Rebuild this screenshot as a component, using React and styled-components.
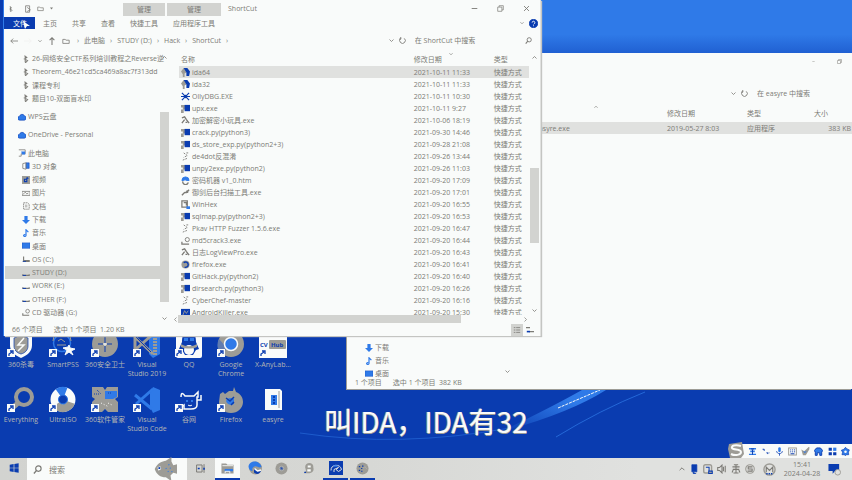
import React from "react";
import styled, { createGlobalStyle, css } from "styled-components";

const c = {
  paper: "#f9fbfa",
  grey: "#9d9c96",
  ink: "#7c7b76",
  navy: "#0a3cb0",
  blue: "#2f7ae8",
  soft: "#e0e1df",
  mid: "#d2d3d0",
};

const GlobalStyle = createGlobalStyle`
  *, *::before, *::after { box-sizing: border-box; }
  body {
    margin: 0;
    overflow: hidden;
    font-family: "Open Sans", "Noto Sans CJK SC", sans-serif;
    font-size: 7px;
    line-height: 9px;
    color: ${c.ink};
  }
  button, input { font: inherit; color: inherit; border: 0; padding: 0; margin: 0; background: none; }
  button { cursor: default; }
  a { color: inherit; text-decoration: none; }
  svg { display: block; flex: none; }
`;

/* ---------- Desktop ---------- */

const Screen = styled.div`
  position: relative;
  display: flex;
  flex-direction: column;
  width: 100%;
  height: 100vh;
  overflow: hidden;
  background: ${c.navy};
`;

const Wallpaper = styled.svg`
  position: absolute;
  inset: 0;
  width: 100%;
  height: 100%;
`;

const IconGrid = styled.main`
  position: relative;
  flex: 1;
  min-height: 0;
  display: grid;
  grid-template-columns: repeat(7, 42px);
  grid-auto-rows: 55px;
  align-content: end;
  padding-bottom: 17px;
`;

const Shortcut = styled.button`
  position: relative;
  display: flex;
  flex-direction: column;
  align-items: center;
  gap: 1px;
  color: #b4b6b4;
  text-align: center;
`;

const ShortcutLabel = styled.span`
  width: 42px;
  white-space: pre-line;
`;

const Badge = styled.svg`
  position: absolute;
  left: 7px;
  top: 18px;
`;

const Caption = styled.p`
  position: absolute;
  left: 0;
  right: 0;
  bottom: 39px;
  margin: 0;
  text-align: center;
  font-family: "Noto Sans CJK SC", sans-serif;
  font-weight: 400;
  font-size: 28px;
  line-height: 40px;
  color: ${c.paper};
  text-shadow: -1px 0 ${c.grey}, 0 1px ${c.grey};
`;

/* ---------- Windows ---------- */

const Frame = styled.section`
  position: absolute;
  display: flex;
  flex-direction: column;
  height: 70vh;
  overflow: hidden;
  background: ${c.paper};
`;

const FrontFrame = styled(Frame)`
  left: 4px;
  top: 0;
  width: 63vw;
  border-right: 1px solid ${c.soft};
  box-shadow: -1px 0 ${c.blue}, 1px 1px 1px #c4c5c2;
`;

const BackFrame = styled(Frame)`
  left: 347px;
  right: 0;
  top: 53px;
  box-shadow: -1px 1px ${c.grey};
`;

const TitleBar = styled.header`
  display: flex;
  align-items: center;
  height: 17px;
  padding-left: 4px;
`;

const QuickAccess = styled.div`
  display: flex;
  align-items: center;
  gap: 5px;
  width: 115px;
`;

const ContextTab = styled.button`
  align-self: stretch;
  width: ${(p) => (p.$wide ? "54px" : "42px")};
  margin: 3px 2px 1px 0;
  background: ${c.mid};
`;

const TitleText = styled.span`
  flex: 1;
  padding-left: 5px;
`;

const Controls = styled.div`
  display: flex;
  align-items: center;
`;

const ControlButton = styled.button`
  display: grid;
  place-items: center;
  width: 26px;
  height: 17px;
`;

const TabRow = styled.nav`
  display: flex;
  align-items: stretch;
  height: 12px;
`;

const Tab = styled.button`
  padding: 0 7px 0 8px;
  ${(p) =>
    p.$file &&
    css`
      position: relative;
      width: 31px;
      background: ${c.navy};
      color: ${c.paper};
    `}
`;

const TabTools = styled.div`
  flex: 1;
  display: flex;
  align-items: center;
  justify-content: flex-end;
  gap: 5px;
  padding-right: 2px;
`;

const Pointer = styled.svg`
  position: absolute;
  left: 19px;
  top: 4px;
`;

const AddressRow = styled.div`
  display: flex;
  align-items: center;
  height: 23px;
  padding-left: 6px;
`;

const NavButtons = styled.div`
  display: flex;
  align-items: center;
  width: 67px;
  gap: 6px;
`;

const Crumbs = styled.div`
  flex: 1;
  display: flex;
  align-items: center;
  gap: 5px;
  white-space: nowrap;
`;

const AddressTools = styled.div`
  display: flex;
  align-items: center;
  gap: 5px;
  width: 26px;
`;

const SearchField = styled.label`
  display: flex;
  align-items: center;
  width: ${(p) => (p.$narrow ? "95px" : "125px")};
  padding-right: 8px;

  input {
    flex: 1;
    min-width: 0;
    height: 11px;
  }
  input::placeholder {
    color: ${c.ink};
    opacity: 1;
  }
`;

const Body = styled.div`
  flex: 1;
  min-height: 0;
  display: flex;
`;

const Sidebar = styled.aside`
  flex: none;
  width: 165px;
  display: flex;
`;

const Tree = styled.nav`
  flex: 1;
  min-width: 0;
  display: flex;
  flex-direction: column;
  justify-content: flex-end;
  padding-bottom: 4px;
  ${(p) =>
    p.$low &&
    css`
      padding-bottom: 0;
      margin-bottom: -4px;
      > a { max-height: 13px; }
    `}
`;

const TreeItem = styled.a`
  flex: 1 1 0;
  max-height: 14px;
  min-height: 0;
  display: flex;
  align-items: center;
  gap: 2px;
  margin-top: ${(p) => (p.$group ? "5px" : "0")};
  margin-left: 1px;
  padding-left: ${(p) => (p.$level ? "17px" : "13px")};
  background: ${(p) => (p.$active ? c.mid : "none")};
  white-space: nowrap;
`;

const VScroll = styled.div`
  flex: none;
  width: ${(p) => (p.$slim ? "9px" : "11px")};
  display: flex;
  flex-direction: column;
  align-items: center;
  padding: 3px 0 2px;
`;

const Thumb = styled.div`
  width: ${(p) => (p.$horizontal ? "283px" : "9px")};
  height: ${(p) => (p.$horizontal ? "8px" : p.$size)};
  margin: ${(p) => (p.$horizontal ? "0 auto 0 0" : `${p.$before} 0 auto`)};
  background: ${c.mid};
`;

const Pane = styled.div`
  flex: 1;
  min-width: 0;
  display: flex;
  flex-direction: column;
`;

const PaneMain = styled.div`
  flex: 1;
  min-height: 0;
  display: flex;
`;

const ListClip = styled.div`
  flex: 1;
  min-width: 0;
  overflow: hidden;
  padding-left: 10px;
`;

const HScroll = styled.div`
  display: flex;
  align-items: center;
  height: 8px;
  padding: 0 12px 0 4px;
`;

const FileTable = styled.table`
  width: 100%;
  table-layout: fixed;
  border-collapse: collapse;
  text-align: left;
  white-space: nowrap;

  th, td { padding: 0 0 0 2px; font-weight: 400; }
  th { position: relative; height: ${(p) => (p.$back ? "17px" : "14px")}; }
  td { height: 12px; }
  th:nth-child(2), td:nth-child(2) { width: 80px; }
  th:nth-child(3), td:nth-child(3) { width: ${(p) => (p.$back ? "67px" : "37px")}; }
  th:nth-child(4) { width: 40px; }
  td:nth-child(4) { text-align: right; padding-right: 1px; }
`;

const SortMark = styled.span`
  position: absolute;
  top: 0;
  left: ${(p) => (p.$name ? "72px" : "37px")};
`;

const FileRow = styled.tr`
  background: ${(p) => (p.$active ? c.soft : "none")};
`;

const FileName = styled.a`
  display: flex;
  align-items: center;
  gap: 2px;
`;

const StatusBar = styled.footer`
  display: flex;
  align-items: center;
  gap: 11px;
  height: 13px;
  padding: 0 4px 0 8px;
`;

const ViewButtons = styled.div`
  display: flex;
  align-items: center;
  gap: 1px;
  margin-left: auto;
`;

const ViewButton = styled.button`
  display: grid;
  place-items: center;
  width: 12px;
  height: 12px;
  background: ${(p) => (p.$active ? c.mid : "none")};
`;

/* ---------- Input method bar and taskbar ---------- */

const InputBar = styled.div`
  position: absolute;
  right: 0;
  bottom: 22px;
  display: flex;
  align-items: center;
  justify-content: space-between;
  width: 112px;
  height: 14px;
  padding: 0 2px 0 8px;
  background: ${c.paper};
`;

const InputLogo = styled.svg`
  position: absolute;
  left: -13px;
  top: -3px;
`;

const Taskbar = styled.footer`
  position: relative;
  display: flex;
  align-items: stretch;
  height: 22px;
  background: linear-gradient(90deg, ${c.mid}, #d6d7d4 40%, ${c.soft} 75%);
`;

const TaskButton = styled.button`
  display: grid;
  place-items: center;
  width: 25px;
  margin: 0 1px;
  border-bottom: 2px solid transparent;
  ${(p) =>
    p.$open &&
    css`
      border-bottom-color: ${c.navy};
      background: ${p.$front ? c.paper : "none"};
    `}
`;

const TaskSearch = styled.label`
  display: flex;
  align-items: center;
  gap: 7px;
  width: 160px;
  padding: 0 10px 0 6px;
  background: ${c.paper};
  font-size: 8px;

  input { flex: 1; min-width: 0; }
  input::placeholder { color: ${c.ink}; opacity: 1; }
`;

const Tray = styled.div`
  display: flex;
  align-items: center;
  gap: 4px;
  margin-left: auto;
  padding-right: 11px;
`;

const TrayButton = styled.button`
  display: grid;
  place-items: center;
  margin-left: ${(p) => (p.$apart ? "4px" : "0")};
`;

const Clock = styled.time`
  width: 44px;
  text-align: center;
`;

/* ---------- Drawings ---------- */

const Glyph = ({ size = 8, box = 10, children }) => (
  <svg
    width={size}
    height={size}
    viewBox={`0 0 ${box} ${box}`}
    fill="none"
    stroke={c.ink}
    strokeWidth="1"
    aria-hidden="true"
  >
    {children}
  </svg>
);

const glyphs = {
  up: <path d="M1 7l4-4 4 4" strokeWidth="1.6" />,
  down: <path d="M1 3l4 4 4-4" strokeWidth="1.6" />,
  left: <path d="M7 1L3 5l4 4" strokeWidth="1.4" />,
  right: <path d="M3 1l4 4-4 4" strokeWidth="1.4" />,
  back: <path d="M10 5H1M4 2L1 5l3 3" />,
  forward: <path d="M0 5h9M6 2l3 3-3 3" stroke="#f1f2f0" />,
  rise: <path d="M5 10V1M2 4l3-3 3 3" strokeWidth="1.3" />,
  refresh: <path d="M7.5 2A4 4 0 1 1 2.5 2M2.5 0v3H0" strokeWidth="1.3" />,
  search: (
    <>
      <circle cx="6" cy="4" r="3" strokeWidth="1.3" />
      <path d="M4 6L1 9.5" strokeWidth="1.5" />
    </>
  ),
  minimize: <path d="M1 5h8" strokeWidth="1.3" />,
  maximize: <path d="M1 3h6v6H1zM3 3V1h6v6H7" />,
  close: <path d="M1.5 1.5l7 7M8.5 1.5l-7 7" strokeWidth="1.3" />,
  link: <path d="M3 1l3 2-3 2 4 2-3 3M4 1v8" strokeWidth="1.3" />,
  clip: <path d="M2 1h5v8H2zM4 3l4 3-4 2" />,
  folder: <path d="M1 3h3l1 1h4v4H1z" />,
  dot: <path d="M2 3h6L5 7z" fill={c.ink} stroke="none" />,
  cloud: (
    <path
      d="M2.5 9A2.500 2.500 0 0 1 2 4a3.200 3.200 0 0 1 6-.5A2.800 2.800 0 0 1 8 9z"
      fill={c.blue}
      stroke={c.navy}
      strokeWidth=".7"
    />
  ),
  drive: (
    <>
      <path d="M1 6.5V8h8V6.500" strokeWidth="1.4" />
      <path d="M1 8h4" stroke={c.navy} strokeWidth="1.2" />
    </>
  ),
  osdrive: (
    <>
      <path d="M2 2v5h7v1H1" strokeWidth="1.4" />
      <path d="M1 8h4" stroke={c.navy} />
    </>
  ),
  disc: (
    <>
      <circle cx="7" cy="4" r="2.300" />
      <path d="M1 6.5V9h8" strokeWidth="1.4" />
    </>
  ),
  pc: (
    <>
      <path d="M1 1h8v5H4v3H1" />
      <path d="M4 3h5v4H5z" fill={c.blue} stroke="none" />
    </>
  ),
  cube: (
    <>
      <path d="M5 1h4v7H5z" fill={c.blue} stroke={c.navy} strokeWidth=".6" />
      <path d="M5 1L1 2v6l4 1z" />
    </>
  ),
  video: (
    <>
      <rect width="10" height="10" fill={c.grey} stroke="none" />
      <path d="M6 2v5H3V4h3M6 2l2 1" stroke={c.navy} strokeWidth="1.4" />
    </>
  ),
  picture: <path d="M0 3h10v5H0zM1 7l3-3 2 2 2-1" />,
  doc: <path d="M2 1h5l2 2v6H2zM4 4h3M4 6h3" strokeDasharray="2 .6" />,
  download: <path d="M3 0h4v5h3L5 10 0 5h3z" fill={c.blue} stroke="none" />,
  music: <path d="M5 8V1l3 3M5 8a1.500 1.200 0 1 1-1-1" stroke={c.blue} strokeWidth="1.5" />,
  desk: <path d="M0 1h10v7H0z" fill={c.blue} stroke={c.navy} strokeWidth=".4" />,
  ida: (
    <>
      <path d="M0 4l3-4 3 1v4l-2 1v4H2V7z" fill={c.grey} stroke="none" />
      <path d="M3 0h4l3 4-1 5H6V5z" fill={c.navy} stroke="none" />
    </>
  ),
  bug: (
    <>
      <path d="M1 1l8 8M9 1L1 9M0 5h10" stroke={c.navy} strokeWidth="1.3" />
      <circle cx="5" cy="5" r="2" fill={c.navy} stroke="none" />
    </>
  ),
  py: (
    <>
      <path d="M0 1h5v5H3v4H0V6h2V4H0z" fill={c.grey} stroke="none" />
      <path d="M4 1h6v7H4z" fill={c.navy} stroke="none" />
    </>
  ),
  tool: <path d="M1 2l3-1 2 3 3 4M4 4L1 8M5 7h2" strokeWidth="1.5" />,
  plain: <path d="M3 1l4 3-4 2M2 9l5-2M6 1h2" strokeDasharray="2 1" />,
  html: (
    <>
      <path d="M1 5a4 4 0 0 1 8 0H6a2 2 0 0 0-3 0z" fill={c.blue} stroke={c.blue} />
      <path d="M2 6a3 3 0 0 0 6 1" strokeWidth="1.5" />
    </>
  ),
  hex: (
    <>
      <path d="M1 1h6v7H1zM3 3h3v3" strokeWidth="1.4" />
      <path d="M6 7h4v3H6z" fill={c.blue} stroke="none" />
    </>
  ),
  fox: (
    <>
      <circle cx="5" cy="5" r="4.500" fill={c.grey} stroke="none" />
      <path d="M3 3a3 3 0 0 1 5 2 3 3 0 0 1-4 3" stroke={c.navy} strokeWidth="1.5" />
    </>
  ),
  killer: (
    <>
      <path d="M0 1h10v9H0z" fill={c.navy} stroke="none" />
      <path d="M2 8l2-5 2 3 2-3" stroke={c.grey} />
    </>
  ),
  wrench: <path d="M1 8l3-3M4 5h2l3-3M6 3l2 2" strokeWidth="1.5" />,
  rows: <path d="M1 2h8M1 5h8M1 8h8" strokeDasharray="2 1 5" />,
  tiles: (
    <>
      <path d="M0 2h5M4 7h6" strokeWidth="1.8" />
      <path d="M1 6h4v2H1z" fill={c.navy} stroke="none" />
    </>
  ),
  help: (
    <>
      <circle cx="5" cy="5" r="4.500" fill={c.navy} stroke={c.navy} />
      <path d="M3.5 4a1.500 1.500 0 1 1 2 1.400L5 6M5 7v1" stroke={c.paper} />
    </>
  ),
};

const Icon = ({ name, size }) => <Glyph size={size}>{glyphs[name]}</Glyph>;

const Art = ({ children, size = 28 }) => (
  <svg width={size} height={size} viewBox="0 0 28 28" fill="none" aria-hidden="true">
    {children}
  </svg>
);

const art = {
  shield: (
    <>
      <path d="M14 0l11 4v10c0 6-4 10-11 13C7 24 3 20 3 14V4z" fill={c.paper} />
      <path d="M14 4l7 3v8c0 4-3 7-7 8-4-1-7-4-7-8V7z" fill={c.grey} stroke={c.navy} strokeWidth=".7" />
      <path d="M17 7l-6 7h6l-6 6" stroke={c.paper} strokeWidth="1.5" />
    </>
  ),
  smart: (
    <>
      <circle cx="13" cy="12" r="8.500" fill={c.navy} stroke={c.blue} strokeWidth="1.5" />
      <path d="M4 10a9 9 0 0 1 18 0M8 14h9M9 10l3-2 4 3" stroke={c.grey} />
      <path d="M20 14l1 3 5 1-4 2 2 4-4-3-4 3 2-5-4-2 5-1z" fill={c.paper} stroke={c.paper} />
    </>
  ),
  guard: (
    <>
      <circle cx="14" cy="13" r="13" fill={c.grey} />
      <path d="M14 6v6M14 15v6M7 13h5M16 13h5" stroke={c.navy} />
      <path d="M14 12v3M12 13h4" stroke={c.paper} />
    </>
  ),
  vs: (
    <>
      <path d="M20 0l7 3v20l-7 4-4-4V5z" fill={c.blue} />
      <path d="M22 4v20" stroke={c.grey} strokeWidth="4" strokeDasharray="2 1" />
      <path d="M2 6l18 17M2 19L20 3M2 6v13" stroke={c.grey} strokeWidth="3" />
      <path d="M3 6l15 15" stroke={c.navy} />
    </>
  ),
  qq: (
    <>
      <rect x="1" y="0" width="26" height="27" rx="2" fill={c.paper} />
      <path d="M14 1c6 0 7 5 7 10l3 7-3 1-3 5h-8l-3-5-3-1 3-7c0-5 1-10 7-10z" fill={c.navy} />
      <path d="M9 7h4v3H9zM15 7h4v3h-4z" fill={c.blue} />
      <ellipse cx="14" cy="19" rx="5" ry="5" fill={c.paper} />
      <path d="M6 13c5 3 11 3 16 0v3c-5 2-11 2-16 0z" fill={c.grey} />
    </>
  ),
  chrome: (
    <>
      <circle cx="14" cy="13" r="13" fill={c.grey} />
      <path d="M2 8l8 9-5 7A13 13 0 0 1 2 8z" fill="#607cb0" />
      <circle cx="14" cy="13" r="6.500" fill={c.blue} stroke={c.paper} strokeWidth="1.5" />
    </>
  ),
  hub: (
    <>
      <rect x="0" y="0" width="28" height="27" fill={c.paper} />
      <rect x="10" y="9" width="17" height="9" rx="1" fill={c.grey} />
      <text x="1" y="16" fontSize="6" fontWeight="700" fill={c.navy}>CV</text>
      <text x="12" y="16" fontSize="6" fontWeight="700" fill={c.navy}>Hub</text>
    </>
  ),
  everything: (
    <>
      <circle cx="17" cy="11" r="8" stroke={c.grey} strokeWidth="4" />
      <path d="M11 17l-8 7" stroke={c.grey} strokeWidth="5" />
    </>
  ),
  iso: (
    <>
      <circle cx="14" cy="13.500" r="8.500" stroke={c.paper} strokeWidth="8" />
      <path d="M9 6.500a8.500 8.500 0 0 1 8-1" stroke={c.blue} strokeWidth="8" />
      <path d="M7 18.500a8.500 8.500 0 0 0 15-2" stroke={c.grey} strokeWidth="8" />
      <circle cx="14" cy="13.500" r="4.500" fill={c.navy} stroke={c.blue} />
    </>
  ),
  petals: (
    <>
      <path d="M1 1h11l2 3 2-3h11v10l-3 2 3 3v10H17l-3-3-3 3H1V16l3-3-3-2z" fill={c.grey} />
      <path d="M14 5h12v6l-4 2h-8z" fill={c.blue} />
      <path d="M6 4l4 4M3 8h6M17 7h4" stroke={c.navy} strokeDasharray="1 1" />
      <path d="M10 17l8 4M17 17l4 2" stroke={c.paper} strokeDasharray="1 2" />
    </>
  ),
  code: (
    <>
      <path d="M20 1l7 3v20l-7 3-3-6V7z" fill={c.blue} />
      <path d="M2 9l17 14M3 18L20 3" stroke={c.blue} strokeWidth="3" />
    </>
  ),
  bull: (
    <>
      <path d="M6 11c0-5 2-4 4-1h9l4-4v5h-1v8c0 3-2 4-6 4H9v-4L5 22M22 14h4v-5" stroke={c.paper} strokeWidth="1.5" fill={c.navy} />
      <path d="M12 14v2M17 14v2" stroke={c.blue} strokeWidth="2" />
      <path d="M13 19c1 1 3 1 4 0" stroke={c.paper} />
    </>
  ),
  firefox: (
    <>
      <path d="M17 1l2 5c5 2 7 6 7 10a12 11 0 0 1-24 0L3 8l3-2 2 2 4-3h4z" fill={c.grey} />
      <path d="M9 15c1-3 5-4 8-2v5c-4 2-7 0-8-3z" fill={c.blue} />
      <path d="M9 12l4 3 4-4M14 19l3-3" stroke={c.navy} strokeWidth="1.5" />
    </>
  ),
  archive: (
    <>
      <path d="M6 3h15l2 2v19H6z" fill={c.paper} />
      <path d="M20 5v17" stroke={c.grey} />
      <path d="M12 9h6v10h-6z" fill={c.blue} />
      <path d="M15 10v8" stroke={c.navy} strokeWidth="2" strokeDasharray="2 1" />
    </>
  ),
  fish: (
    <>
      <path d="M4 14c3-7 8-8 12-9l6-4v5l2 4 4-1v10l-4-1-3 3 1 6-6-4C10 23 6 20 4 14z" fill={c.grey} />
      <path d="M19 9l4 9M16 13l4 6" stroke={c.blue} strokeWidth="1.3" strokeDasharray="1 3" />
      <path d="M7 12l3-1 1 3-3 2z" fill={c.paper} />
      <path d="M9 12v2" stroke={c.navy} strokeWidth="2" />
    </>
  ),
  start: <path d="M2 5l11-2v10H2zM15 3l12-2v12H15zM2 15h11v10L2 23zM15 15h12v12l-12-2z" fill={c.navy} />,
  taskview: (
    <>
      <path d="M4 5v18M23 3v22M4 5h14v18H4" stroke={c.ink} strokeWidth="2.500" />
      <path d="M7 12h5v4H7zM21 12h4v5h-4z" fill={c.navy} />
    </>
  ),
  folder: (
    <>
      <path d="M1 3h10l3 3h13v19H1z" fill={c.grey} />
      <path d="M8 15h18v5H8z" fill={c.blue} />
      <path d="M3 8h23M9 24v-4h10v5" stroke={c.paper} strokeWidth="2" />
    </>
  ),
  edge: (
    <>
      <circle cx="15" cy="14" r="13" fill={c.grey} />
      <path d="M1 11C3-3 24-2 27 12c-6 3-9-3-14-1-4 1-5 5-4 9C5 20 1 16 1 11z" fill={c.blue} />
      <path d="M12 14c2 6 7 8 14 6-3 6-9 8-14 3z" fill={c.navy} />
      <path d="M13 15l6 5 7-2" stroke={c.paper} strokeWidth="3" />
    </>
  ),
  ring: (
    <>
      <circle cx="14" cy="14" r="13" fill={c.grey} />
      <circle cx="14" cy="14" r="5" fill="#7d8cab" stroke="#b0b0ac" strokeWidth="2" />
      <path d="M12 13h3v3" stroke={c.navy} strokeWidth="2" />
    </>
  ),
  browser: (
    <>
      <circle cx="14" cy="14" r="13" fill={c.grey} />
      <path d="M6 10h3M11 14h3M6 18h3M13 9h3M11 20h3" stroke={c.navy} strokeWidth="2.500" />
      <path d="M15 14l4-4 5 5" stroke="#b0b0ac" strokeWidth="2" />
    </>
  ),
  person: (
    <>
      <path d="M5 12C5-1 26-1 24 13c3 9-5 13-11 13H2l5-5z" fill={c.grey} />
      <path d="M11 8h7v5h-7zM10 17h8v5h-8z" fill={c.paper} />
      <path d="M3 24h4" stroke={c.navy} strokeWidth="3" />
    </>
  ),
  ida: (
    <>
      <rect width="28" height="28" fill={c.navy} />
      <path d="M4 19c-1-13 19-14 21-2l-6 4-5-4 5-4-9 4v5" stroke={c.soft} strokeWidth="2" />
      <path d="M9 10h8" stroke={c.blue} strokeWidth="3" />
    </>
  ),
  shieldTray: (
    <>
      <rect x="2" y="2" width="22" height="23" rx="5" stroke={c.grey} strokeWidth="4" />
      <path d="M8 9h9v9M16 20h10v7H16z" stroke={c.navy} strokeWidth="3" />
    </>
  ),
  usb: <path d="M8 2h14v20H8zM12 22v5h8" fill={c.navy} stroke={c.navy} strokeWidth="2" />,
  speaker: <path d="M2 10h5l7-7v22l-7-7H2zM18 8v12M23 5v18" stroke={c.ink} strokeWidth="3" />,
  wifi: <path d="M4 8h20M8 2h12M5 15h18M14 2v23M7 25h14M6 17l-3 7M22 17l3 7" stroke={c.ink} strokeWidth="3" />,
  sogou: (
    <>
      <circle cx="14" cy="14" r="12" stroke={c.grey} strokeWidth="3" />
      <path d="M21 8H9v6h11v6H7" stroke={c.ink} strokeWidth="3" />
    </>
  ),
  letterM: (
    <>
      <circle cx="14" cy="14" r="12" stroke={c.grey} strokeWidth="3" />
      <path d="M7 20V9l7 7 7-7v11" stroke={c.ink} strokeWidth="2.500" />
      <path d="M7 23h14" stroke={c.navy} strokeWidth="3" strokeDasharray="3 2" />
    </>
  ),
  notice: (
    <>
      <path d="M1 2h23v15h-9l-5 6v-6H1z" fill={c.navy} />
      <circle cx="21" cy="20" r="6" fill={c.soft} stroke={c.grey} strokeWidth="2" />
    </>
  ),
  imeChar: (
    <>
      <path d="M3 3h22v5H3zM7 11h14v5H7zM3 21h22v4H3z" fill={c.blue} />
      <path d="M9 6h10M14 8v16" stroke={c.navy} strokeWidth="3" />
    </>
  ),
  imeDots: <path d="M5 7h5v5M17 18h4v4M24 18h2" stroke={c.navy} strokeWidth="3" />,
  imeMic: (
    <>
      <rect x="10" y="1" width="8" height="15" rx="4" fill={c.blue} />
      <path d="M5 13c1 10 17 10 18 0M14 20v7" stroke={c.navy} strokeWidth="2.500" />
    </>
  ),
  imeKeys: (
    <>
      <rect x="2" y="3" width="24" height="22" stroke={c.grey} strokeWidth="3" />
      <path d="M7 9h3M13 9h3M19 9h3M7 15h3M13 15h3M19 15h3M8 21h12" stroke={c.navy} strokeWidth="3" />
    </>
  ),
  imeCheck: (
    <>
      <path d="M1 8l9 5L26-2v9L15 26H6z" fill={c.grey} />
      <path d="M9 13l3 5 4-5" stroke={c.blue} strokeWidth="3" />
    </>
  ),
  imeShirt: <path d="M8 3h12l7 8-3 5v10h-6v-8h-8v8H4V16l-3-5z" fill={c.blue} stroke={c.navy} strokeWidth="3" />,
  imeApps: (
    <>
      <path d="M2 2h10v10H2zM2 16h10v10H2zM16 16h10v10H16z" fill={c.navy} />
      <path d="M16 2h10v10H16z" fill={c.blue} />
    </>
  ),
  imeGear: (
    <>
      <path d="M14 1l5 5 7 3-3 7 1 8h-7l-3 3-4-3H3l2-8-4-6 8-3z" fill={c.blue} stroke={c.navy} strokeWidth="2" />
      <circle cx="14" cy="15" r="4" fill={c.paper} />
    </>
  ),
};

/* ---------- Data ---------- */

const places = [
  { icon: "link", label: "26-网络安全CTF系列培训教程之Reverse逆", level: 1 },
  { icon: "link", label: "Theorem_46e21cd5ca469a8ac7f313dd", level: 1 },
  { icon: "link", label: "课程专利", level: 1 },
  { icon: "link", label: "题目10-双面盲水印", level: 1 },
  { icon: "cloud", label: "WPS云盘", group: true },
  { icon: "cloud", label: "OneDrive - Personal", group: true },
  { icon: "pc", label: "此电脑", group: true },
  { icon: "cube", label: "3D 对象", level: 1 },
  { icon: "video", label: "视频", level: 1 },
  { icon: "picture", label: "图片", level: 1 },
  { icon: "doc", label: "文档", level: 1 },
  { icon: "download", label: "下载", level: 1 },
  { icon: "music", label: "音乐", level: 1 },
  { icon: "desk", label: "桌面", level: 1 },
  { icon: "osdrive", label: "OS (C:)", level: 1 },
  { icon: "drive", label: "STUDY (D:)", level: 1, active: true },
  { icon: "drive", label: "WORK (E:)", level: 1 },
  { icon: "drive", label: "OTHER (F:)", level: 1 },
  { icon: "disc", label: "CD 驱动器 (G:)", level: 1 },
];

const files = [
  ["ida", "ida64", "2021-10-11 11:33"],
  ["ida", "ida32", "2021-10-11 11:33"],
  ["bug", "OllyDBG.EXE", "2021-10-11 10:30"],
  ["py", "upx.exe", "2021-10-11 9:27"],
  ["tool", "加密解密小玩具.exe", "2021-10-06 18:19"],
  ["py", "crack.py(python3)", "2021-09-30 14:46"],
  ["py", "ds_store_exp.py(python2+3)", "2021-09-28 21:08"],
  ["plain", "de4dot反混淆", "2021-09-26 13:44"],
  ["py", "unpy2exe.py(python2)", "2021-09-26 11:03"],
  ["html", "密码机器 v1_0.htm", "2021-09-20 17:09"],
  ["wrench", "御剑后台扫描工具.exe", "2021-09-20 17:01"],
  ["hex", "WinHex", "2021-09-20 16:55"],
  ["py", "sqlmap.py(python2+3)", "2021-09-20 16:53"],
  ["plain", "Pkav HTTP Fuzzer 1.5.6.exe", "2021-09-20 16:47"],
  ["disc", "md5crack3.exe", "2021-09-20 16:44"],
  ["tool", "日志LogViewPro.exe", "2021-09-20 16:43"],
  ["fox", "firefox.exe", "2021-09-20 16:41"],
  ["py", "GitHack.py(python2)", "2021-09-20 16:40"],
  ["py", "dirsearch.py(python3)", "2021-09-20 16:26"],
  ["plain", "CyberChef-master", "2021-09-20 16:16"],
  ["killer", "AndroidKiller.exe", "2021-09-20 15:30"],
];

const shortcuts = [
  ["shield", "360杀毒"],
  ["smart", "SmartPSS"],
  ["guard", "360安全卫士"],
  ["vs", "Visual\nStudio 2019"],
  ["qq", "QQ"],
  ["chrome", "Google\nChrome"],
  ["hub", "X-AnyLab..."],
  ["everything", "Everything"],
  ["iso", "UltraISO"],
  ["petals", "360软件管家"],
  ["code", "Visual\nStudio Code"],
  ["bull", "谷网"],
  ["firefox", "Firefox"],
  ["archive", "easyre", true],
];

const tasks = [
  ["taskview", "任务视图", 11],
  ["folder", "文件资源管理器", 13, true, true],
  ["edge", "Edge", 14],
  ["ring", "浏览器", 13],
  ["person", "联系人", 12],
  ["ida", "IDA", 14, true],
  ["browser", "Chrome", 13, true],
];

const tray = [
  ["usb", "设备"],
  ["shieldTray", "安全"],
  ["speaker", "音量"],
  ["wifi", "网络"],
  ["sogou", "输入法"],
];

const imeTools = [
  ["imeChar", "中英文"],
  ["imeDots", "标点"],
  ["imeMic", "语音"],
  ["imeKeys", "软键盘"],
  ["imeCheck", "手写"],
  ["imeShirt", "皮肤"],
  ["imeApps", "工具箱"],
  ["imeGear", "设置"],
];

/* ---------- Parts ---------- */

const WindowControls = () => (
  <Controls>
    <ControlButton aria-label="最小化"><Icon name="minimize" size={7} /></ControlButton>
    <ControlButton aria-label="最大化"><Icon name="maximize" size={7} /></ControlButton>
    <ControlButton aria-label="关闭"><Icon name="close" size={7} /></ControlButton>
  </Controls>
);

const TreeView = ({ items, low }) => (
  <Tree aria-label="位置" $low={low}>
    {items.map((p) => (
      <TreeItem key={p.label} href="#" $level={p.level} $group={p.group} $active={p.active}>
        <Icon name={p.icon} />
        {p.label}
      </TreeItem>
    ))}
  </Tree>
);

const FrontWindow = () => (
  <FrontFrame aria-label="ShortCut">
    <TitleBar>
      <QuickAccess>
        <Icon name="link" size={6} />
        <span />
        <Icon name="clip" />
        <Icon name="folder" size={7} />
        <Icon name="dot" size={5} />
      </QuickAccess>
      <ContextTab>管理</ContextTab>
      <ContextTab $wide>管理</ContextTab>
      <TitleText>ShortCut</TitleText>
      <WindowControls />
    </TitleBar>
    <TabRow>
      <Tab $file>
        文件
        <Pointer width="8" height="9" viewBox="0 0 8 9" aria-hidden="true">
          <path d="M0 0l7 5H4L2 8z" fill={c.paper} />
        </Pointer>
      </Tab>
      <Tab>主页</Tab>
      <Tab>共享</Tab>
      <Tab>查看</Tab>
      <Tab>快捷工具</Tab>
      <Tab>应用程序工具</Tab>
      <TabTools>
        <Icon name="down" size={4} />
        <Icon name="help" size={9} />
      </TabTools>
    </TabRow>
    <AddressRow>
      <NavButtons>
        <Icon name="back" />
        <Icon name="forward" />
        <Icon name="down" size={4} />
        <Icon name="rise" />
        <Icon name="folder" />
      </NavButtons>
      <Crumbs>
        <span>›</span>
        <a href="#">此电脑</a>
        <span>›</span>
        <a href="#">STUDY (D:)</a>
        <span>›</span>
        <a href="#">Hack</a>
        <span>›</span>
        <a href="#">ShortCut</a>
        <span>›</span>
      </Crumbs>
      <AddressTools>
        <Icon name="down" size={5} />
        <Icon name="refresh" size={7} />
      </AddressTools>
      <SearchField>
        <input type="text" aria-label="搜索 ShortCut" placeholder="在 ShortCut 中搜索" />
        <Icon name="search" size={7} />
      </SearchField>
    </AddressRow>
    <Body>
      <Sidebar>
        <TreeView items={places} />
        <VScroll $slim>
          <Icon name="up" size={5} />
          <Thumb $size="190px" $before="52px" />
          <Icon name="down" size={5} />
        </VScroll>
      </Sidebar>
      <Pane>
        <PaneMain>
          <ListClip>
            <FileTable>
              <thead>
                <tr>
                  <th>名称</th>
                  <th>
                    修改日期
                    <SortMark><Icon name="down" size={4} /></SortMark>
                  </th>
                  <th>类型</th>
                </tr>
              </thead>
              <tbody>
                {files.map(([icon, name, date], i) => (
                  <FileRow key={name} $active={i === 0}>
                    <td>
                      <FileName href="#">
                        <Icon name={icon} size={9} />
                        {name}
                      </FileName>
                    </td>
                    <td>{date}</td>
                    <td>快捷方式</td>
                  </FileRow>
                ))}
              </tbody>
            </FileTable>
          </ListClip>
          <VScroll>
            <Icon name="up" size={5} />
            <Thumb $size="75px" $before="108px" />
            <Icon name="down" size={5} />
          </VScroll>
        </PaneMain>
        <HScroll>
          <Icon name="left" size={5} />
          <Thumb $horizontal />
          <Icon name="right" size={5} />
        </HScroll>
      </Pane>
    </Body>
    <StatusBar>
      <span>66 个项目</span>
      <span>选中 1 个项目&nbsp; 1.20 KB</span>
      <ViewButtons>
        <ViewButton $active aria-label="详细信息"><Icon name="rows" /></ViewButton>
        <ViewButton aria-label="大图标"><Icon name="tiles" /></ViewButton>
      </ViewButtons>
    </StatusBar>
  </FrontFrame>
);

const BackWindow = () => (
  <BackFrame aria-label="easyre">
    <TitleBar>
      <TitleText />
      <Controls>
        <ControlButton aria-label="最小化"><Icon name="minimize" size={3} /></ControlButton>
        <ControlButton aria-label="关闭"><Icon name="maximize" size={5} /></ControlButton>
      </Controls>
    </TitleBar>
    <TabRow />
    <AddressRow>
      <Crumbs />
      <AddressTools>
        <Icon name="down" size={5} />
        <Icon name="refresh" size={7} />
      </AddressTools>
      <SearchField $narrow>
        <input type="text" aria-label="搜索 easyre" placeholder="在 easyre 中搜索" />
      </SearchField>
    </AddressRow>
    <Body>
      <Sidebar>
        <TreeView items={places.slice(11, 14)} low />
        <VScroll $slim>
          <Icon name="up" size={5} />
          <Thumb $size="190px" $before="10px" />
          <Icon name="down" size={5} />
        </VScroll>
      </Sidebar>
      <Pane>
        <ListClip>
          <FileTable $back>
            <thead>
              <tr>
                <th>
                  名称
                  <SortMark $name><Icon name="up" size={4} /></SortMark>
                </th>
                <th>修改日期</th>
                <th>类型</th>
                <th>大小</th>
              </tr>
            </thead>
            <tbody>
              <FileRow $active>
                <td>
                  <FileName href="#">
                    <Icon name="py" size={9} />
                    easyre.exe
                  </FileName>
                </td>
                <td>2019-05-27 8:03</td>
                <td>应用程序</td>
                <td>383 KB</td>
              </FileRow>
            </tbody>
          </FileTable>
        </ListClip>
      </Pane>
    </Body>
    <StatusBar>
      <span>1 个项目</span>
      <span>选中 1 个项目&nbsp; 382 KB</span>
    </StatusBar>
  </BackFrame>
);

const Backdrop = () => (
  <Wallpaper viewBox="0 0 852 480" preserveAspectRatio="none" aria-hidden="true">
    <defs>
      <linearGradient id="sky" x1="0" y1="0" x2="0" y2="1">
        <stop offset="0" stopColor={c.blue} />
        <stop offset=".65" stopColor={c.blue} />
        <stop offset="1" stopColor="#2060d2" />
      </linearGradient>
      <linearGradient id="beam" x1="0" y1="1" x2="1" y2="0">
        <stop offset="0" stopColor={c.navy} />
        <stop offset=".7" stopColor={c.blue} />
      </linearGradient>
    </defs>
    <rect x="541" width="311" height="53" fill="url(#sky)" />
    <path d="M500 432Q550 408 582 390H606Q568 414 500 432z" fill="url(#beam)" />
    <path d="M558 408L600 390" stroke={c.paper} strokeWidth="1" strokeDasharray="3 1" />
    <path d="M556 437Q600 410 645 392" stroke={c.blue} strokeWidth="1" fill="none" opacity=".7" />
    <path d="M300 433Q400 448 510 428" stroke={c.blue} strokeWidth="1" fill="none" opacity=".5" />
  </Wallpaper>
);

export default function App() {
  return (
    <>
      <GlobalStyle />
      <Screen>
        <Backdrop />
        <IconGrid>
          {shortcuts.map(([name, label, real]) => (
            <Shortcut key={name}>
              <Art>{art[name]}</Art>
              {!real && (
                <Badge width="8" height="8" viewBox="0 0 8 8" aria-hidden="true">
                  <rect width="8" height="8" fill={c.paper} />
                  <path d="M2 7V5l3-2M3 2h3v3" stroke={c.navy} strokeWidth="1.3" fill="none" />
                </Badge>
              )}
              <ShortcutLabel>{label}</ShortcutLabel>
            </Shortcut>
          ))}
        </IconGrid>
        <BackWindow />
        <FrontWindow />
        <Caption>叫IDA，IDA有32</Caption>
        <InputBar>
          <InputLogo width="18" height="18" viewBox="0 0 18 18" aria-hidden="true">
            <path d="M2 3l13-2 2 12-3 4H3L1 8z" fill={c.grey} />
            <path d="M14 5C8 3 4 5 5 7s9 1 9 4-6 4-10 2" stroke={c.paper} strokeWidth="2" fill="none" />
          </InputLogo>
          {imeTools.map(([name, label]) => (
            <TrayButton key={name} aria-label={label}>
              <Art size={9}>{art[name]}</Art>
            </TrayButton>
          ))}
        </InputBar>
        <Taskbar>
          <TaskButton aria-label="开始"><Art size={10}>{art.start}</Art></TaskButton>
          <TaskSearch>
            <Icon name="search" size={9} />
            <input type="text" aria-label="搜索" placeholder="搜索" />
            <Art size={26}>{art.fish}</Art>
          </TaskSearch>
          {tasks.map(([name, label, size, open, front]) => (
            <TaskButton key={label} aria-label={label} $open={open} $front={front}>
              <Art size={size}>{art[name]}</Art>
            </TaskButton>
          ))}
          <Tray>
            <Icon name="up" size={6} />
            {tray.map(([name, label]) => (
              <TrayButton key={name} aria-label={label}>
                <Art size={10}>{art[name]}</Art>
              </TrayButton>
            ))}
            <TrayButton $apart aria-label="邮件"><Art size={13}>{art.letterM}</Art></TrayButton>
            <Clock>
              15:41
              <br />
              2024-04-28
            </Clock>
            <TrayButton aria-label="通知"><Art size={13}>{art.notice}</Art></TrayButton>
          </Tray>
        </Taskbar>
      </Screen>
    </>
  );
}
